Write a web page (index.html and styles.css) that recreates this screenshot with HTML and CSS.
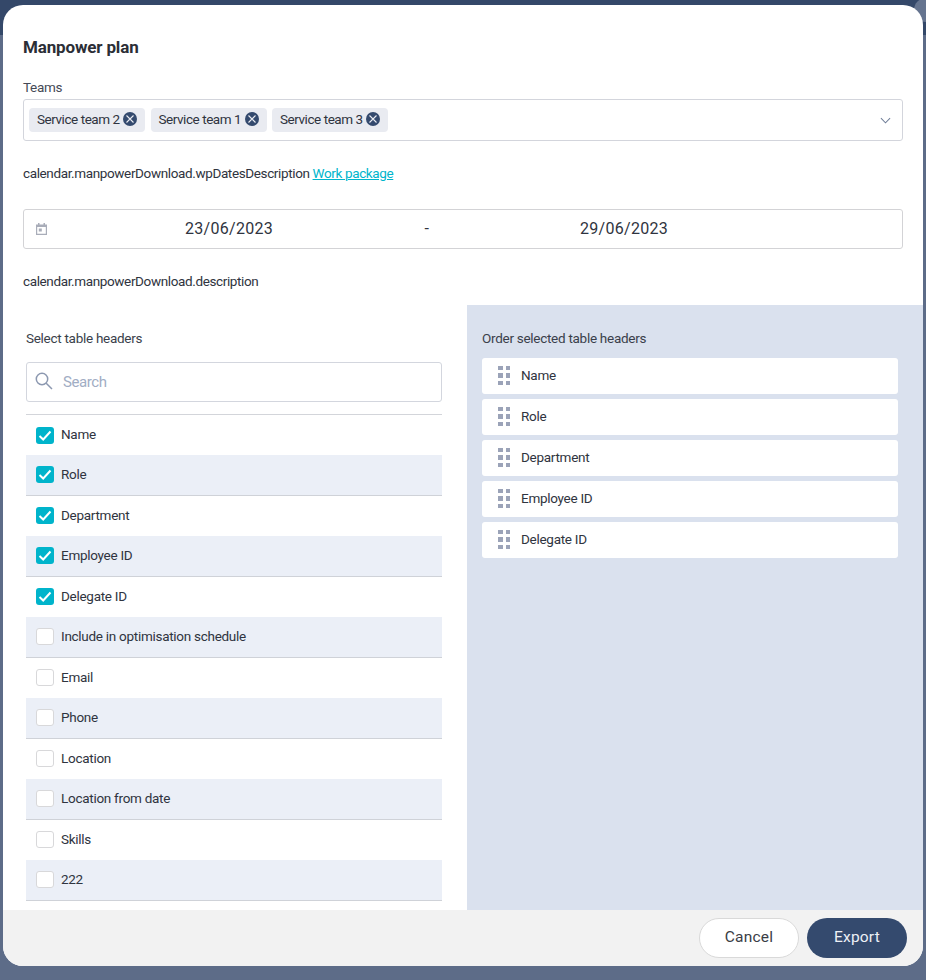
FILE: index.html
```html
<!DOCTYPE html>
<html lang="en">
<head>
    <meta charset="UTF-8">
    <meta name="viewport" content="width=device-width, initial-scale=1.0">
    <title>Manpower plan</title>
    <link rel="stylesheet" href="styles.css">
</head>
<body>
    <span class="help-dot"></span>
    <div class="modal">
        <div class="top">
            <h2 class="title">Manpower plan</h2>
            <div class="field-label">Teams</div>
            <div class="select-box">
                <span class="chip">Service team 2
                    <svg class="chip-x" viewBox="0 0 14 14"><circle cx="7" cy="7" r="7"/><path d="M3.5 3.5l7 7M10.500 3.500l-7 7"/></svg>
                </span>
                <span class="chip">Service team 1
                    <svg class="chip-x" viewBox="0 0 14 14"><circle cx="7" cy="7" r="7"/><path d="M3.5 3.5l7 7M10.500 3.500l-7 7"/></svg>
                </span>
                <span class="chip">Service team 3
                    <svg class="chip-x" viewBox="0 0 14 14"><circle cx="7" cy="7" r="7"/><path d="M3.5 3.5l7 7M10.500 3.500l-7 7"/></svg>
                </span>
                <svg class="chevron" viewBox="0 0 12 7"><path d="M1 1l5 5 5-5"/></svg>
            </div>
            <p class="desc desc-wp">calendar.manpowerDownload.wpDatesDescription <a href="#">Work package</a></p>
            <div class="date-box">
                <svg class="cal-icon" viewBox="0 0 11 12"><path d="M0 1.500h2v-1.500h1.500v1.500h4v-1.500h1.500v1.500h2v10.500h-11zM1.200 4v6.800h8.600v-6.800z"/><rect x="2.800" y="5.500" width="3" height="3"/></svg>
                <span class="date">23/06/2023</span>
                <span class="date-sep">-</span>
                <span class="date">29/06/2023</span>
            </div>
            <p class="desc desc-main">calendar.manpowerDownload.description</p>
        </div>

        <div class="columns">
            <div class="col-left">
                <div class="col-label">Select table headers</div>
                <div class="search">
                    <svg class="search-icon" viewBox="0 0 18 18"><circle cx="7" cy="7" r="5.700"/><path d="M11.200 11.200l5.800 5.800"/></svg>
                    <span>Search</span>
                </div>
                <div class="header-list">
                    <div class="row"><span class="check on"><svg viewBox="0 0 18 17"><path d="M3.500 9l3.700 3.500 7.300-8"/></svg></span><span>Name</span></div>
                    <div class="row"><span class="check on"><svg viewBox="0 0 18 17"><path d="M3.500 9l3.700 3.500 7.300-8"/></svg></span><span>Role</span></div>
                    <div class="row"><span class="check on"><svg viewBox="0 0 18 17"><path d="M3.500 9l3.700 3.500 7.300-8"/></svg></span><span>Department</span></div>
                    <div class="row"><span class="check on"><svg viewBox="0 0 18 17"><path d="M3.500 9l3.700 3.500 7.300-8"/></svg></span><span>Employee ID</span></div>
                    <div class="row"><span class="check on"><svg viewBox="0 0 18 17"><path d="M3.500 9l3.700 3.500 7.300-8"/></svg></span><span>Delegate ID</span></div>
                    <div class="row"><span class="check"></span><span>Include in optimisation schedule</span></div>
                    <div class="row"><span class="check"></span><span>Email</span></div>
                    <div class="row"><span class="check"></span><span>Phone</span></div>
                    <div class="row"><span class="check"></span><span>Location</span></div>
                    <div class="row"><span class="check"></span><span>Location from date</span></div>
                    <div class="row"><span class="check"></span><span>Skills</span></div>
                    <div class="row"><span class="check"></span><span>222</span></div>
                </div>
            </div>
            <div class="col-right">
                <div class="col-label">Order selected table headers</div>
                <div class="order-list">
                    <div class="order-item"><span class="grip"><i></i><i></i><i></i><i></i><i></i><i></i></span>Name</div>
                    <div class="order-item"><span class="grip"><i></i><i></i><i></i><i></i><i></i><i></i></span>Role</div>
                    <div class="order-item"><span class="grip"><i></i><i></i><i></i><i></i><i></i><i></i></span>Department</div>
                    <div class="order-item"><span class="grip"><i></i><i></i><i></i><i></i><i></i><i></i></span>Employee ID</div>
                    <div class="order-item"><span class="grip"><i></i><i></i><i></i><i></i><i></i><i></i></span>Delegate ID</div>
                </div>
            </div>
        </div>

        <div class="footer">
            <button class="btn btn-cancel">Cancel</button>
            <button class="btn btn-export">Export</button>
        </div>
    </div>
</body>
</html>
```

FILE: styles.css
```css
* {
    margin: 0;
    padding: 0;
    box-sizing: border-box;
    font-family: 'Roboto', 'Noto Sans', sans-serif;
}

body {
    position: relative;
    height: 980px;
    overflow: hidden;
    padding: 5px 3px 14px;
    background: linear-gradient(#344869 35px, #5d6c88 35px);
    color: #2f3440;
    font-size: 13.500px;
    line-height: 18px;
    letter-spacing: -0.280px;
}

.help-dot {
    position: absolute;
    top: -2px;
    right: -12px;
    width: 24px;
    height: 24px;
    border-radius: 50%;
    background: #65748f;
}

.modal {
    position: relative;
    height: 961px;
    display: flex;
    flex-direction: column;
    background: #fff;
    border-radius: 20px;
    overflow: hidden;
}

.top {
    padding: 30px 20px 0;
}

.title {
    font-size: 17px;
    line-height: 24px;
    font-weight: 700;
    letter-spacing: -0.150px;
    color: #2b2e36;
}

.field-label,
.desc,
.col-label {
    line-height: 16px;
    padding-bottom: 2px;
}

.field-label {
    margin-top: 20px;
    color: #454a56;
}

.select-box {
    height: 42px;
    margin-top: 2px;
    padding: 0 5px;
    display: flex;
    align-items: center;
    gap: 5.500px;
    border: 1px solid #d3d5dc;
    border-radius: 3px;
}

.chip {
    width: 116px;
    height: 24px;
    display: flex;
    align-items: center;
    justify-content: space-between;
    padding: 0 8px 2px;
    background: #e9ebf1;
    border-radius: 4px;
    white-space: nowrap;
    letter-spacing: -0.450px;
}

.chip-x {
    width: 14px;
    height: 14px;
}

.chip-x circle {
    fill: #344a6e;
}

.chip-x path {
    stroke: #e9ebf1;
    stroke-width: 1.100;
    fill: none;
}

.chevron {
    width: 11px;
    height: 7px;
    margin-left: auto;
    margin-right: 6px;
    margin-top: 1px;
}

.chevron path {
    stroke: #6f7d97;
    stroke-width: 1.100;
    fill: none;
}

.desc {
    letter-spacing: -0.370px;
}

.desc-wp {
    margin-top: 24px;
}

.desc-wp a {
    color: #00b5cc;
}

.date-box {
    height: 40px;
    margin-top: 26px;
    padding-left: 12px;
    display: flex;
    align-items: center;
    border: 1px solid #d3d3d6;
    border-radius: 3px;
}

.cal-icon {
    width: 11px;
    height: 12px;
    fill: #a9adb9;
    margin-right: 1px;
    flex-shrink: 0;
}

.date {
    width: 362px;
    text-align: center;
    font-size: 16px;
    letter-spacing: 0.300px;
}

.date-sep {
    width: 33px;
    text-align: center;
    font-size: 16px;
}

.desc-main {
    margin-top: 24px;
}

.columns {
    flex: 1;
    min-height: 0;
    margin-top: 14px;
    display: flex;
}

.col-left {
    width: 464px;
    padding: 25px 25px 0 23px;
}

.col-right {
    flex: 1;
    padding: 25px 25px 0 15px;
    background: #dae1ee;
}

.col-label {
    color: #3a3f4b;
}

.search {
    height: 40px;
    margin-top: 14px;
    padding-left: 8px;
    display: flex;
    align-items: center;
    gap: 10px;
    border: 1px solid #d3d6de;
    border-radius: 3px;
    color: #a1adc4;
    font-size: 15px;
    letter-spacing: -0.400px;
}

.search-icon {
    width: 18px;
    height: 18px;
    margin-top: -2px;
}

.search-icon circle,
.search-icon path {
    fill: none;
    stroke: #8c98b0;
    stroke-width: 1.500;
}

.header-list {
    margin-top: 12px;
    border-top: 1px solid #d3d5da;
}

.row {
    height: 40.500px;
    padding-left: 10px;
    display: flex;
    align-items: center;
    gap: 7px;
}

.row span:last-child {
    margin-top: -1px;
}

.row:first-child {
    height: 40px;
}

.row:first-child span:last-child {
    margin-top: -2px;
}

.row:nth-child(even) {
    background: #ebeff7;
    border-bottom: 1px solid #cfd2d8;
}

.row .check {
    width: 18px;
    height: 17px;
    flex-shrink: 0;
    background: #fff;
    border: 1px solid #d8d8da;
    border-radius: 3px;
}

.row .check.on {
    background: #00b4cb;
    border: none;
}

.check svg {
    display: block;
    width: 18px;
    height: 17px;
}

.check path {
    fill: none;
    stroke: #fff;
    stroke-width: 2;
}

.order-list {
    margin-top: 10px;
    display: flex;
    flex-direction: column;
    gap: 5px;
}

.order-item {
    height: 36px;
    padding: 0 0 2px 16px;
    display: flex;
    align-items: center;
    gap: 11px;
    background: #fff;
    border-radius: 3px;
}

.grip {
    width: 12px;
    display: grid;
    grid-template-columns: 4.500px 4.500px;
    justify-content: space-between;
    row-gap: 3px;
    margin-top: 1px;
}

.grip i {
    height: 4.500px;
    background: #9ba3b8;
}

.footer {
    height: 56px;
    padding: 8px 16px;
    display: flex;
    justify-content: flex-end;
    gap: 8px;
    background: #f2f2f2;
}

.btn {
    width: 100px;
    height: 40px;
    border-radius: 20px;
    font-size: 15.500px;
    letter-spacing: 0.200px;
    padding-bottom: 2px;
}

.btn-cancel {
    background: #fff;
    border: 1px solid #d9d9d9;
    color: #3a3d45;
}

.btn-export {
    background: #344a6e;
    border: none;
    color: #eef1f6;
}
```
